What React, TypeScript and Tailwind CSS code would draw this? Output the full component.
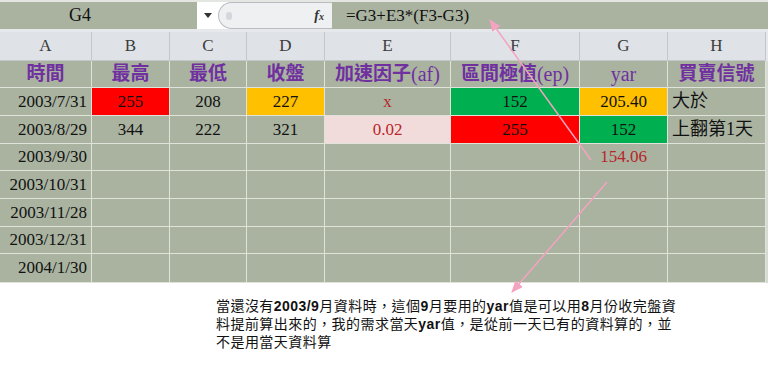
import React from "react";

const serif = "font-['Liberation_Serif','Noto_Sans_CJK_TC',serif]";

type Cell = {
  t?: string;
  bg?: string;
  color?: string;
  align?: "l" | "c" | "r";
  cjk?: boolean;
};

const cols = ["A", "B", "C", "D", "E", "F", "G", "H"];
const titles: [string, string][] = [
  ["時間", ""],
  ["最高", ""],
  ["最低", ""],
  ["收盤", ""],
  ["加速因子", "(af)"],
  ["區間極值", "(ep)"],
  ["", "yar"],
  ["買賣信號", ""],
];

const rows: Cell[][] = [
  [
    { t: "2003/7/31", align: "r" },
    { t: "255", bg: "bg-[#ff0000]" },
    { t: "208" },
    { t: "227", bg: "bg-[#ffc000]" },
    { t: "x", color: "text-[#b8252a]" },
    { t: "152", bg: "bg-[#00b050]" },
    { t: "205.40", bg: "bg-[#ffc000]" },
    { t: "大於", align: "l", cjk: true },
  ],
  [
    { t: "2003/8/29", align: "r" },
    { t: "344" },
    { t: "222" },
    { t: "321" },
    { t: "0.02", bg: "bg-[#f2dcdb]", color: "text-[#b8252a]" },
    { t: "255", bg: "bg-[#ff0000]" },
    { t: "152", bg: "bg-[#00b050]" },
    { t: "上翻第1天", align: "l", cjk: true },
  ],
  [
    { t: "2003/9/30", align: "r" },
    {}, {}, {}, {}, {},
    { t: "154.06", color: "text-[#b8252a]" },
    {},
  ],
  [{ t: "2003/10/31", align: "r" }, {}, {}, {}, {}, {}, {}, {}],
  [{ t: "2003/11/28", align: "r" }, {}, {}, {}, {}, {}, {}, {}],
  [{ t: "2003/12/31", align: "r" }, {}, {}, {}, {}, {}, {}, {}],
  [{ t: "2004/1/30", align: "r" }, {}, {}, {}, {}, {}, {}, {}],
];

const rowH = ["h-[28px]", "h-[28px]", "h-[27px]", "h-[28px]", "h-[28px]", "h-[27px]", "h-[29px]"];

export default function App() {
  return (
    <div className="relative w-[768px] h-[369px] overflow-hidden bg-white">
      {/* top thin line */}
      <div className="h-[2px] bg-[#e4e6e2]" />
      {/* formula bar */}
      <div className="flex h-[27px] bg-[#a9b3a0]">
        <div className={`w-[197px] flex items-center pl-[69px] text-[18px] text-[#111] ${serif}`}>G4</div>
        <div className="w-[135px] bg-white flex items-stretch">
          <div className="w-[21px] flex items-center justify-center">
            <svg width="8" height="5" viewBox="0 0 8 5">
              <path d="M0 0 L8 0 L4 5 Z" fill="#333" />
            </svg>
          </div>
          <div className="flex-1 bg-[#eef0f2] rounded-l-[14px] border-l border-t border-b border-[#b9bdc2] flex items-center justify-between pl-[7px] pr-[8px]">
            <div className="w-[6px] h-[8px] rounded-[3px] bg-[#d4d7db]" />
            <span className={`italic font-bold text-[14px] text-[#333] ${serif}`}>
              f<span className="text-[10px]">x</span>
            </span>
          </div>
        </div>
        <div className={`flex-1 flex items-center pl-[14px] text-[17px] text-[#111] ${serif}`}>=G3+E3*(F3-G3)</div>
      </div>
      {/* separator */}
      <div className="h-[3px] bg-[#e6e8eb]" />
      {/* grid */}
      <div className="grid grid-cols-[92px_78px_77px_78px_126px_129px_88px_98px_2px]">
        {cols.map((c) => (
          <div
            key={c}
            className={`h-[29px] bg-[#dfe2e7] border-r border-b border-[#c4c8cd] flex items-center justify-center text-[17px] text-[#3a3a3a] ${serif}`}
          >
            {c}
          </div>
        ))}
        <div className="h-[29px] bg-[#e6e8eb]" />
        {titles.map(([cj, la], i) => (
          <div
            key={i}
            className={`h-[27px] bg-[#a9b3a0] border-r border-b border-[#dfe3da] flex items-center justify-center text-[19px] text-[#7030a0] whitespace-nowrap ${serif}`}
          >
            {cj && <span className="font-bold">{cj}</span>}
            {la && <span className="text-[20px]">{la}</span>}
          </div>
        ))}
        <div className="h-[27px] bg-[#d6dad2]" />
        {rows.map((r, ri) => (
          <React.Fragment key={ri}>
            {r.map((c, ci) => (
              <div
                key={ci}
                className={`${rowH[ri]} ${c.bg ?? "bg-[#a9b3a0]"} border-r border-b border-[#dfe3da] flex items-center whitespace-nowrap ${
                  c.align === "r" ? "justify-end pr-[4px]" : c.align === "l" ? "justify-start pl-[4px]" : "justify-center"
                } ${c.cjk ? "text-[18px]" : "text-[17px]"} ${c.color ?? "text-[#111]"} ${serif}`}
              >
                {c.t}
              </div>
            ))}
            <div className={`${rowH[ri]} bg-[#d6dad2]`} />
          </React.Fragment>
        ))}
      </div>
      {/* note */}
      <div className="mt-[14px] pl-[216px] text-[14px] leading-[18px] tracking-[0.45px] text-[#111] whitespace-nowrap font-['Liberation_Sans','Noto_Sans_CJK_TC',sans-serif]">
        <div>
          當還沒有<b>2003/9</b>月資料時，這個<b>9</b>月要用的<b>yar</b>值是可以用<b>8</b>月份收完盤資
        </div>
        <div>
          料提前算出來的，我的需求當天<b>yar</b>值，是從前一天已有的資料算的，並
        </div>
        <div>不是用當天資料算</div>
      </div>
      {/* arrows overlay */}
      <svg className="absolute inset-0 pointer-events-none" width="768" height="369" viewBox="0 0 768 369">
        <defs>
          <marker id="ah" markerWidth="12" markerHeight="10" refX="11" refY="5" orient="auto" markerUnits="userSpaceOnUse">
            <path d="M0 0 L12 5 L0 10 Z" fill="#f4a3c0" />
          </marker>
        </defs>
        <line x1="591" y1="160" x2="490" y2="20" stroke="#f4a3c0" strokeWidth="1.5" markerEnd="url(#ah)" />
        <line x1="607" y1="182" x2="512" y2="292" stroke="#f4a3c0" strokeWidth="1.5" markerEnd="url(#ah)" />
      </svg>
    </div>
  );
}
